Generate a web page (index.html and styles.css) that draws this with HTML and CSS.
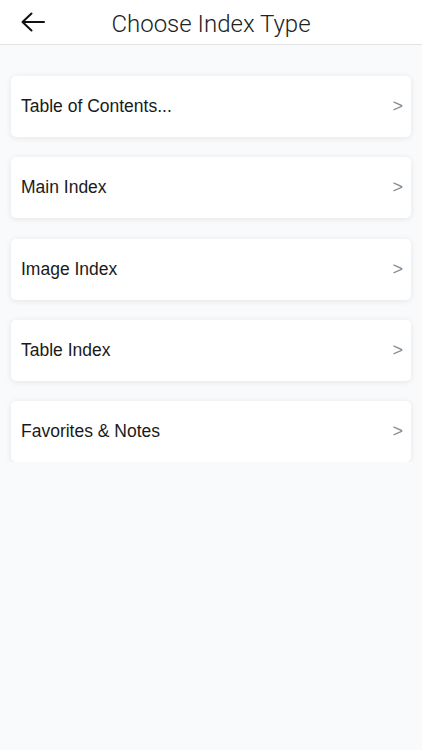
FILE: index.html
```html
<!DOCTYPE html>
<html>
<head>
    <title>Choose Index Type</title>
    <link rel="stylesheet" href="styles.css">
</head>
<body>
    <div class="topbar">
        <button class="back-btn" aria-label="Back">
            <svg width="24" height="20" viewBox="0 0 24 20">
                <path d="M1.5 10 H23 M10.5 1.5 L1.5 10 L10.5 18.5" fill="none" stroke="#111" stroke-width="2" stroke-linecap="round" stroke-linejoin="round"/>
            </svg>
        </button>
        <h1 class="title">Choose Index Type</h1>
    </div>

    <div class="list">
        <div class="card"><span>Table of Contents...</span><span class="chev">&gt;</span></div>
        <div class="card"><span>Main Index</span><span class="chev">&gt;</span></div>
        <div class="card"><span>Image Index</span><span class="chev">&gt;</span></div>
        <div class="card"><span>Table Index</span><span class="chev">&gt;</span></div>
        <div class="card"><span>Favorites &amp; Notes</span><span class="chev">&gt;</span></div>
    </div>
</body>
</html>
```

FILE: styles.css
```css
body {
    margin: 0;
    background-color: #f9fafc;
    font-family: "Liberation Sans", Arial, sans-serif;
    color: #1a1a1a;
}
        .topbar {
            height: 44px;
            background-color: #fff;
            border-bottom: 1px solid #e2e2e4;
            display: flex;
            align-items: center;
            justify-content: center;
            position: relative;
        }
        .back-btn {
            position: absolute;
            left: 21px;
            top: 12px;
            border: none;
            background: none;
            padding: 0;
            width: 24px;
            height: 20px;
        }
        .title {
            margin: 3px 0 0 0;
            font-family: Roboto, "Liberation Sans", sans-serif;
            font-weight: 300;
            font-size: 24px;
            color: #222;
        }
        .list {
            display: flex;
            flex-direction: column;
            gap: 20.25px;
            padding: 31px 11px 0 11px;
        }
        .card {
            height: 61px;
            background-color: #fff;
            border-radius: 5px;
            box-shadow: 0 1px 6px rgba(0, 0, 0, 0.09);
            display: flex;
            align-items: center;
            justify-content: space-between;
            padding: 0 8px 0 10px;
            font-size: 17.5px;
        }
        .chev {
            color: #8a8a8a;
            font-size: 18px;
        }
```
